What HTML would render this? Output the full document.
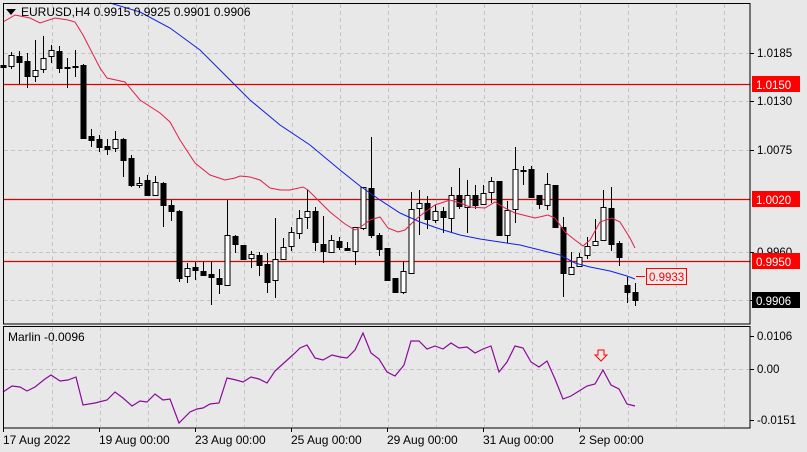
<!DOCTYPE html>
<html><head><meta charset="utf-8"><style>
html,body{margin:0;padding:0;background:#e8e8e8;width:807px;height:452px;overflow:hidden}
svg{display:block;font-family:"Liberation Sans",sans-serif}
</style></head><body>
<svg id="s" width="807" height="452" viewBox="0 0 807 452" xmlns="http://www.w3.org/2000/svg">
<rect width="807" height="452" fill="#e8e8e8"/>
<g id="grid" stroke="#c4c4c4" stroke-dasharray="4,3" stroke-width="1"></g>
<line x1="3" y1="84.5" x2="750" y2="84.5" stroke="#e00000" stroke-width="1.3"/>
<line x1="3" y1="199.5" x2="750" y2="199.5" stroke="#e00000" stroke-width="1.3"/>
<line x1="3" y1="261.5" x2="750" y2="261.5" stroke="#e00000" stroke-width="1.3"/>
<g id="c"></g>
<polyline id="red" fill="none" stroke="#e0204a" stroke-width="1"/>
<polyline id="blue" fill="none" stroke="#1020e0" stroke-width="1"/>
<polyline id="mar" fill="none" stroke="#8a0a9a" stroke-width="1.2"/>
<rect x="3.5" y="3.5" width="746.5" height="320.5" fill="none" stroke="#000"/>
<rect x="3.5" y="326.5" width="746.5" height="101.5" fill="none" stroke="#000"/>
<path d="M6 9 L16 9 L11 15 Z" fill="#000"/>
<text x="21" y="16" font-size="12" fill="#000">EURUSD,H4  0.9915 0.9925 0.9901 0.9906</text>
<text x="8" y="341" font-size="12" fill="#000">Marlin -0.0096</text>
<g font-size="11.5" fill="#000">
<text x="757" y="57">1.0185</text><line x1="750" y1="53.5" x2="754" y2="53.5" stroke="#000"/>
<text x="757" y="105">1.0130</text><line x1="750" y1="101.5" x2="754" y2="101.5" stroke="#000"/>
<text x="757" y="154">1.0075</text><line x1="750" y1="150.5" x2="754" y2="150.5" stroke="#000"/>
<text x="757" y="256">0.9960</text><line x1="750" y1="252.5" x2="754" y2="252.5" stroke="#000"/>
<text x="757" y="340">0.0106</text><line x1="750" y1="336.5" x2="754" y2="336.5" stroke="#000"/>
<text x="757" y="373">0.00</text><line x1="750" y1="369.5" x2="754" y2="369.5" stroke="#000"/>
<text x="757" y="424">-0.0151</text><line x1="750" y1="420.5" x2="754" y2="420.5" stroke="#000"/>
</g>
<rect x="752" y="76" width="48" height="16" fill="#f00"/><text x="756" y="89" font-size="11.5" fill="#fff">1.0150</text>
<rect x="752" y="191" width="48" height="16" fill="#f00"/><text x="756" y="204" font-size="11.5" fill="#fff">1.0020</text>
<rect x="752" y="253" width="48" height="16" fill="#f00"/><text x="756" y="266" font-size="11.5" fill="#fff">0.9950</text>
<rect x="752" y="292" width="48" height="16" fill="#000"/><text x="756" y="305" font-size="11.5" fill="#fff">0.9906</text>
<line x1="750" y1="300.5" x2="754" y2="300.5" stroke="#000"/>
<line x1="636" y1="276.5" x2="645" y2="276.5" stroke="#f00"/>
<rect x="646.5" y="268.5" width="40" height="16" fill="#e8e8e8" stroke="#f00"/>
<text x="649" y="281" font-size="11.5" fill="#f00">0.9933</text>
<path d="M598 350 h6 v5 h3 l-6 6 l-6 -6 h3 z" fill="#e8e8e8" stroke="#f00" stroke-width="1"/>
<g font-size="12" fill="#000">
<text x="3" y="444">17 Aug 2022</text>
<text x="99" y="444">19 Aug 00:00</text>
<text x="195" y="444">23 Aug 00:00</text>
<text x="291" y="444">25 Aug 00:00</text>
<text x="387" y="444">29 Aug 00:00</text>
<text x="483" y="444">31 Aug 00:00</text>
<text x="579" y="444">2 Sep 00:00</text>
</g>
<g stroke="#000"><line x1="3.5" y1="428" x2="3.5" y2="432"/><line x1="99.5" y1="428" x2="99.5" y2="432"/><line x1="195.5" y1="428" x2="195.5" y2="432"/><line x1="291.5" y1="428" x2="291.5" y2="432"/><line x1="387.5" y1="428" x2="387.5" y2="432"/><line x1="483.5" y1="428" x2="483.5" y2="432"/><line x1="579.5" y1="428" x2="579.5" y2="432"/></g>
</svg>
<script>
var NS="http://www.w3.org/2000/svg";
function el(t,a,p){var e=document.createElementNS(NS,t);for(var k in a)e.setAttribute(k,a[k]);p.appendChild(e);return e;}
var g=document.getElementById('grid');
for(var x=52;x<750;x+=48){el('line',{x1:x+.5,y1:4,x2:x+.5,y2:323},g);el('line',{x1:x+.5,y1:327,x2:x+.5,y2:427},g);}
[53,101,150,252,300].forEach(function(y){el('line',{x1:4,y1:y+.5,x2:749,y2:y+.5},g);});
el('line',{x1:4,y1:369.5,x2:749,y2:369.5},g);
// x, wickTop, bodyTop, bodyBot, wickBot, bull(1)/bear(0)
var C=[[3,63,65,67,69,0],[11,52,55,66,69,1],[19,51,56,62,84,0],[27,53,61,76,88,0],[35,40,70,76,82,1],[43,36,58,69,73,1],[51,45,50,56,63,1],[59,46,51,68,73,0],[67,58,67,68,88,0],[75,50,66,67,77,0],
[83,64,65,138,139,0],[91,129,136,140,147,0],[99,135,139,147,152,0],[107,139,146,149,155,0],[115,131,139,148,152,1],[123,138,139,160,177,0],[131,155,158,185,187,0],[139,177,183,185,188,1],[147,175,180,195,196,0],[155,176,182,195,196,1],
[163,182,183,205,227,0],[171,200,205,211,221,0],[179,210,211,278,282,0],[187,263,268,276,283,1],[195,262,267,270,280,0],[203,262,271,275,275,0],[211,262,274,277,305,0],[219,269,278,284,294,0],[227,200,235,285,285,1],[235,235,236,244,253,0],
[243,245,245,259,259,0],[251,251,254,258,268,1],[259,252,255,265,276,0],[267,253,264,282,293,0],[275,218,259,280,298,1],[283,238,247,259,259,1],[291,227,232,246,251,1],[299,210,218,233,239,1],[307,190,211,217,229,1],[315,207,211,242,251,0],
[323,216,244,251,263,0],[331,235,240,252,253,1],[339,237,241,247,250,0],[347,242,248,250,251,0],[355,227,227,251,265,1],[363,187,187,228,230,1],[371,137,188,235,238,0],[379,233,235,249,256,0],[387,248,248,280,281,0],[395,278,278,292,293,0],
[403,262,271,292,294,1],[411,192,209,273,273,1],[419,190,203,208,235,1],[427,196,203,219,229,0],[435,205,211,220,223,1],[443,207,211,217,233,0],[451,187,195,218,233,1],[459,168,195,206,209,0],[467,180,195,207,233,1],[475,185,195,205,209,0],
[483,185,193,204,204,1],[491,177,181,192,203,1],[499,181,181,235,236,0],[507,201,210,235,243,1],[515,147,169,209,223,1],[523,166,170,171,185,0],[531,166,169,197,198,0],[539,195,195,204,209,0],[547,173,184,205,210,1],[555,185,185,227,228,0],
[563,217,227,273,297,0],[571,252,267,274,274,1],[579,253,257,266,267,1],[587,237,246,255,259,1],[595,219,241,245,245,1],[603,190,207,240,240,1],[611,187,208,244,251,0],[619,241,243,257,266,0],[627,277,285,292,303,0],[635,283,292,300,306,0]];
var cg=document.getElementById('c');
C.forEach(function(c){
 el('line',{x1:c[0]+.5,y1:c[1],x2:c[0]+.5,y2:c[4],stroke:'#000','stroke-width':1},cg);
 var h=Math.max(1,c[3]-c[2]);
 if(c[5])el('rect',{x:c[0]-2,y:c[2]+.5,width:5,height:h,fill:'#fff',stroke:'#000','stroke-width':1},cg);
 else el('rect',{x:c[0]-2.5,y:c[2],width:6,height:h+1,fill:'#000'},cg);
});
function P(a){return a.map(function(p){return p.join(',')}).join(' ');}
document.getElementById('red').setAttribute('points',P([[3,22],[15,15],[30,18],[40,23],[55,18],[68,20],[75,22],[83,35],[100,68],[107,78],[125,82],[140,100],[160,113],[170,122],[180,140],[195,163],[210,175],[225,180],[235,178],[240,176],[250,177],[260,180],[270,188],[280,190],[290,190],[303,187],[308,190],[316,198],[330,212],[345,224],[355,230],[362,226],[370,220],[380,217],[388,228],[398,232],[405,230],[415,220],[425,212],[435,205],[450,200],[463,204],[470,207],[485,208],[495,202],[505,208],[515,213],[523,215],[535,218],[548,215],[555,218],[565,232],[575,240],[583,246],[590,240],[600,222],[612,218],[620,222],[630,238],[635,248]]));
document.getElementById('blue').setAttribute('points',P([[110,3],[140,12],[170,28],[200,50],[225,75],[250,100],[280,125],[310,145],[340,170],[360,186],[380,200],[400,213],[420,222],[440,229],[460,235],[480,239],[500,242],[520,245],[540,250],[560,255],[575,263],[590,267],[610,271],[627,276],[635,279]]));
document.getElementById('mar').setAttribute('points',P([[3,392],[12,386],[20,387],[27,391],[35,387],[45,379],[51,375],[60,381],[68,380],[76,377],[83,405],[95,403],[107,400],[115,392],[123,398],[132,406],[140,401],[147,402],[155,394],[163,400],[170,399],[179,423],[190,412],[197,409],[203,408],[210,404],[219,403],[227,378],[236,380],[243,382],[251,377],[259,379],[267,383],[275,371],[285,362],[295,353],[300,348],[307,345],[315,358],[323,360],[332,355],[340,357],[347,358],[355,350],[363,333],[371,353],[379,359],[387,372],[395,376],[400,370],[404,365],[411,341],[419,341],[427,349],[435,346],[443,349],[451,343],[459,348],[467,347],[475,353],[483,349],[491,346],[499,372],[507,362],[515,346],[523,348],[531,362],[539,367],[547,361],[555,379],[563,399],[571,396],[579,391],[587,386],[595,384],[603,370],[611,385],[619,389],[627,404],[635,406]]));
</script>
</body></html>
